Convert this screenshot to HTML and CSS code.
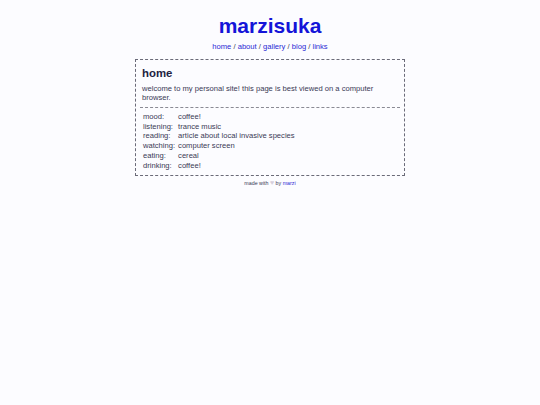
FILE: index.html
```html
<!DOCTYPE html>
<html>
<head>
<meta charset="utf-8">
<title>marzisuka</title>
<link rel="stylesheet" href="styles.css">
</head>
<body>
<header class="top">
  <h1 class="title">marzisuka</h1>
  <nav class="nav"><a href="#">home</a> / <a href="#">about</a> / <a href="#">gallery</a> / <a href="#">blog</a> / <a href="#">links</a></nav>
</header>
<main class="box">
  <h2 class="heading">home</h2>
  <p class="intro">welcome to my personal site! this page is best viewed on a computer browser.</p>
  <hr class="sep">
  <div class="status">
    <span>mood:</span><span>coffee!</span>
    <span>listening:</span><span>trance music</span>
    <span>reading:</span><span>article about local invasive species</span>
    <span>watching:</span><span>computer screen</span>
    <span>eating:</span><span>cereal</span>
    <span>drinking:</span><span>coffee!</span>
  </div>
</main>
<footer class="foot">made with <span class="heart">♥</span> by <a href="#">marzi</a></footer>
</body>
</html>
```
FILE: styles.css
```css
html, body {
  margin: 0;
  padding: 0;
  background: #fcfcff;
}
body {
  font-family: "Liberation Sans", Arial, sans-serif;
  color: #3a3a55;
  font-size: 7.6px;
}
.top {
  text-align: center;
  padding-top: 14px;
}
.title {
  margin: 0;
  font-size: 21px;
  line-height: 24px;
  font-weight: bold;
  color: #1414d8;
}
.nav {
  margin-top: 4px;
  font-size: 7.6px;
  line-height: 9px;
  color: #3a3a55;
}
.nav a {
  color: #2a2ad4;
  text-decoration: none;
}
.box {
  width: 256px;
  margin: 8px auto 0;
  padding: 5px 6px 4px 6px;
  border: 1px dashed #6a6a78;
}
.heading {
  margin: 0;
  font-size: 11.4px;
  line-height: 16px;
  font-weight: bold;
  color: #22223f;
}
.intro {
  margin: 3px 0 0;
  line-height: 9.4px;
}
.sep {
  margin: 4px -2px 4px;
  border: 0;
  border-top: 1px dashed #8a8a94;
  height: 0;
}
.status {
  display: grid;
  grid-template-columns: max-content 1fr;
  column-gap: 3px;
  grid-auto-rows: 9.8px;
  line-height: 9.8px;
  padding-left: 1px;
}
.foot {
  text-align: center;
  font-size: 5.3px;
  margin-top: 3px;
  color: #3a3a55;
}
.foot a {
  color: #2a2ad4;
  text-decoration: none;
}
.heart {
  color: #d6cfdc;
  font-size: 7px;
}
```
